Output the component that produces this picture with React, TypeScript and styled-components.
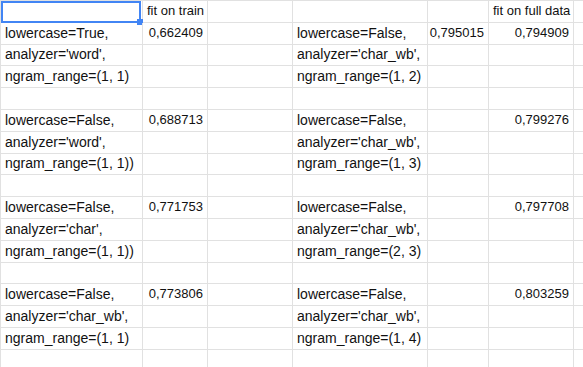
import React from "react";
import styled, { createGlobalStyle } from "styled-components";

type Align = "left" | "right";

interface CellData {
  text?: string;
  align?: Align;
  small?: boolean;
}

const columns = [142, 65, 85, 135, 61, 85];

const label = (text: string): CellData => ({ text });
const num = (text: string): CellData => ({ text, align: "right", small: true });
const empty: CellData = {};

const blankRow = (): CellData[] => Array.from({ length: 7 }, () => empty);

const block = (
  a: [string, string, string],
  trainScore: string,
  d: [string, string, string],
  e: string,
  f: string
): CellData[][] => [
  [label(a[0]), num(trainScore), empty, label(d[0]), e ? num(e) : empty, f ? num(f) : empty, empty],
  [label(a[1]), empty, empty, label(d[1]), empty, empty, empty],
  [label(a[2]), empty, empty, label(d[2]), empty, empty, empty],
  blankRow(),
];

const rows: CellData[][] = [
  [
    empty,
    { text: "fit on train", small: true },
    empty,
    empty,
    empty,
    { text: "fit on full data", small: true },
    empty,
  ],
  ...block(
    ["lowercase=True,", "analyzer='word',", "ngram_range=(1, 1)"],
    "0,662409",
    ["lowercase=False,", "analyzer='char_wb',", "ngram_range=(1, 2)"],
    "0,795015",
    "0,794909"
  ),
  ...block(
    ["lowercase=False,", "analyzer='word',", "ngram_range=(1, 1))"],
    "0,688713",
    ["lowercase=False,", "analyzer='char_wb',", "ngram_range=(1, 3)"],
    "",
    "0,799276"
  ),
  ...block(
    ["lowercase=False,", "analyzer='char',", "ngram_range=(1, 1))"],
    "0,771753",
    ["lowercase=False,", "analyzer='char_wb',", "ngram_range=(2, 3)"],
    "",
    "0,797708"
  ),
  ...block(
    ["lowercase=False,", "analyzer='char_wb',", "ngram_range=(1, 1)"],
    "0,773806",
    ["lowercase=False,", "analyzer='char_wb',", "ngram_range=(1, 4)"],
    "",
    "0,803259"
  ),
];

const App: React.FC = () => {
  return (
    <>
      <GlobalStyle />
      <Sheet>
        {rows.map((row, r) =>
          row.map((cell, c) => (
            <Cell key={`${r}-${c}`} align={cell.align ?? "left"} small={!!cell.small}>
              {cell.text}
              {r === 0 && c === 0 && (
                <Selection>
                  <Handle />
                </Selection>
              )}
            </Cell>
          ))
        )}
      </Sheet>
    </>
  );
};

export default App;

const GlobalStyle = createGlobalStyle`
  html,
  body {
    margin: 0;
    background: #ffffff;
    overflow: hidden;
  }

  body {
    font-family: "Liberation Sans", Arial, sans-serif;
    color: #111111;
  }
`;

const Sheet = styled.div`
  display: grid;
  grid-template-columns: ${columns.map((w) => `${w}px`).join(" ")} 1fr;
  grid-auto-rows: 21.8px;
  width: 600px;
  border-left: 1px solid #e1e1e1;
  border-top: 1px solid #e1e1e1;
`;

const Cell = styled.div<{ align: Align; small: boolean }>`
  position: relative;
  box-sizing: border-box;
  display: flex;
  align-items: flex-end;
  justify-content: ${({ align }) => (align === "right" ? "flex-end" : "flex-start")};
  padding: 0 ${({ align }) => (align === "right" ? "4px" : "3px")} 3px
    ${({ align }) => (align === "right" ? "3px" : "4px")};
  border-right: 1px solid #e1e1e1;
  border-bottom: 1px solid #e1e1e1;
  font-size: ${({ small }) => (small ? "13px" : "14px")};
  line-height: 16px;
  white-space: nowrap;
`;

const Selection = styled.div`
  position: absolute;
  left: 0;
  top: 0;
  right: 1px;
  bottom: -1px;
  border: 2px solid #4285f4;
  pointer-events: none;
`;

const Handle = styled.div`
  position: absolute;
  right: -4px;
  bottom: -4px;
  width: 6px;
  height: 6px;
  background: #4285f4;
`;
